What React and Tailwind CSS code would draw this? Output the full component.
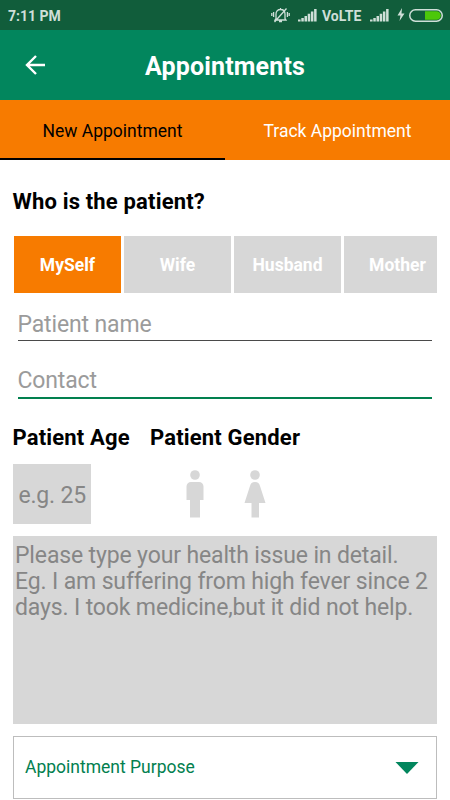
import { useState } from 'react';

const relations = ['MySelf', 'Wife', 'Husband', 'Mother'];
const tabs = ['New Appointment', 'Track Appointment'];

function SignalBars() {
  return (
    <svg width="19" height="14" viewBox="0 0 19 14" fill="currentColor">
      <path d="M0 11.500h2.600v1.900H0z M3.300 10h2.500v3.400H3.300z M6.500 8h2.500v5.400H6.500z M9.700 5.700h2.500v7.700H9.700z M12.900 3.400h2.500v10h-2.500z M16.100 1h2.500v12.400h-2.500z" />
    </svg>
  );
}

function StatusBar() {
  return (
    <div className="h-[30px] bg-[#115d3b] text-[#cfdfd8] flex items-center justify-between pl-2 pr-[7px]">
      <span className="text-[14px] font-bold leading-none mt-[2px]">7:11 PM</span>
      <div className="flex items-center">
        <svg width="19" height="16" viewBox="0 0 19 16" fill="none" stroke="currentColor" strokeWidth="1.3">
          <path d="M9.500 1v1.200 M5 11.500V7c0-2.800 1.800-4.500 4.500-4.500S14 4.200 14 7v4.500l1 1.500H4z M8 14.500h3 M3.500 15L15.500 1.500 M2.600 5v5 M0.800 6v3 M16.400 5v5 M18.200 6v3" />
        </svg>
        <div className="ml-[8px]"><SignalBars /></div>
        <span className="ml-[5px] text-[14px] font-bold leading-none w-[41px] whitespace-nowrap mt-[2px]">VoLTE</span>
        <div className="ml-[7px]"><SignalBars /></div>
        <svg className="ml-[8px]" width="8" height="14" viewBox="0 0 8 14" fill="currentColor">
          <path d="M5 0L0.500 7.500H3.500L2.500 13L7.500 5.500H4.500z" />
        </svg>
        <svg className="ml-[4px]" width="34" height="13" viewBox="0 0 34 13">
          <path d="M16 2.200h11.500a4.300 4.300 0 0 1 0 8.600H16z" fill="#4cc80a" />
          <rect x="0.750" y="0.750" width="32.500" height="11.500" rx="5.750" fill="none" stroke="currentColor" strokeWidth="1.500" />
        </svg>
      </div>
    </div>
  );
}

function MaleIcon() {
  return (
    <svg width="18" height="48" viewBox="0 0 18 48" fill="currentColor">
      <circle cx="9" cy="5" r="4.800" />
      <path d="M5 12h8a4.500 4.500 0 0 1 4.500 4.500V30h-3.500v17.500H4V30H0.500V16.500A4.500 4.500 0 0 1 5 12z" />
    </svg>
  );
}

function FemaleIcon() {
  return (
    <svg width="22" height="48" viewBox="0 0 22 48" fill="currentColor">
      <circle cx="11" cy="5" r="4.800" />
      <path d="M11 12c3 0 4.300 1.500 5 4L21.500 33H15v14.500H7.500V33H0.500L6 16c0.700-2.500 2-4 5-4z" />
    </svg>
  );
}

export default function App() {
  const [tab, setTab] = useState(tabs[0]);
  const [relation, setRelation] = useState('MySelf');

  return (
    <div className="w-[450px] h-[800px] overflow-hidden bg-white font-['Roboto',sans-serif] text-black">
      <StatusBar />

      {/* App bar */}
      <header className="h-[70px] bg-[#02865d] text-white grid grid-cols-[70px_1fr_70px] items-center">
        <button className="justify-self-center" aria-label="Back">
          <svg width="20" height="20" viewBox="0 0 20 20" fill="none" stroke="currentColor" strokeWidth="2.400">
            <path d="M20 10H2 M11 1L2 10l9 9" />
          </svg>
        </button>
        <h1 className="text-center text-[25px] tracking-[0.15px] font-bold leading-none mt-[2px]">Appointments</h1>
      </header>

      {/* Tabs */}
      <div className="h-[60px] grid grid-cols-2 bg-[#f77b00]">
        {tabs.map((name) => (
          <button
            key={name}
            onClick={() => setTab(name)}
            className={`text-[17.5px] pt-[4px] border-b-2 ${tab === name ? 'text-black border-black' : 'text-white border-transparent'}`}
          >
            {name}
          </button>
        ))}
      </div>

      <main className="pl-[12.5px] pr-[13px]">
        <h2 className="pt-[29px] h-[76px] text-[22px] tracking-[0.17px] leading-[26px] font-bold">Who is the patient?</h2>

        <div className="ml-[1.5px] flex gap-[3px] overflow-hidden">
          {relations.map((name) => (
            <button
              key={name}
              onClick={() => setRelation(name)}
              className={`w-[107px] h-[57px] shrink-0 text-[17.5px] font-bold text-white pt-[2px] ${relation === name ? 'bg-[#f77b00]' : 'bg-[#d7d7d7]'}`}
            >
              {name}
            </button>
          ))}
        </div>

        <div className="px-[5px]">
          <input
            className="block w-full h-[48px] pt-[16px] text-[23px] tracking-[-0.14px] border-b border-[#4a4a4a] placeholder:text-[#9b9b9b] outline-none"
            placeholder="Patient name"
          />
          <input
            className="block w-full h-[58px] pt-[23px] text-[23px] tracking-[-0.14px] border-b-2 border-[#02804f] placeholder:text-[#9b9b9b] outline-none"
            placeholder="Contact"
          />
        </div>

        <div className="flex mt-[26px] text-[22px] tracking-[0.17px] leading-[26px] font-bold">
          <h2 className="w-[137.5px]">Patient Age</h2>
          <h2>Patient Gender</h2>
        </div>

        <div className="flex items-center mt-[13px]">
          <input
            className="w-[78.5px] h-[60px] pl-[6px] pt-[2px] bg-[#d7d7d7] text-[23px] tracking-[-0.2px] placeholder:text-[#868686] outline-none"
            placeholder="e.g. 25"
          />
          <div className="flex gap-[40px] ml-[95px] text-[#d7d7d7]">
            <button aria-label="Male"><MaleIcon /></button>
            <button aria-label="Female"><FemaleIcon /></button>
          </div>
        </div>

        <textarea
          className="block mt-[12px] w-full h-[188px] pt-[7px] pl-[2.5px] bg-[#d7d7d7] text-[23px] tracking-[-0.14px] leading-[26px] placeholder:text-[#868686] outline-none resize-none"
          placeholder={'Please type your health issue in detail.\nEg. I am suffering from high fever since 2\ndays. I took medicine,but it did not help.'}
        />

        <button className="mt-[12px] w-full h-[63px] flex items-center justify-between pl-[11.500px] pr-[17px] border border-[#bdbdbd] text-[17.5px] text-[#02804f]">
          Appointment Purpose
          <svg width="24" height="12" viewBox="0 0 24 12" fill="#02865d">
            <path d="M0.500 0h23L12 12z" />
          </svg>
        </button>
      </main>
    </div>
  );
}
